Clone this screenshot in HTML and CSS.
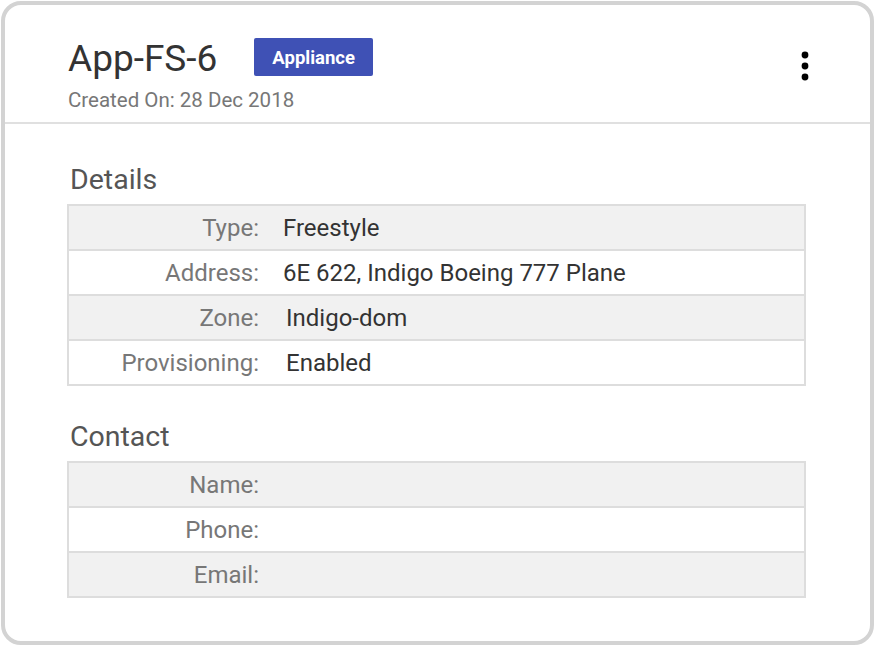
FILE: index.html
```html
<!DOCTYPE html>
<html lang="en">
<head>
  <meta charset="UTF-8">
  <title>App-FS-6</title>
  <link rel="stylesheet" href="styles.css">
</head>
<body>

  <div class="card">
    <div class="card-header">
      <div class="title-block">
        <div class="title-row">
          <h1>App-FS-6</h1>
          <span class="badge">Appliance</span>
        </div>
        <div class="created">Created On: 28 Dec 2018</div>
      </div>
      <button class="menu-btn" aria-label="More">
        <svg width="10" height="30" viewBox="0 0 10 30">
          <circle cx="5" cy="4" r="3.4" fill="#000"/>
          <circle cx="5" cy="15" r="3.4" fill="#000"/>
          <circle cx="5" cy="26" r="3.4" fill="#000"/>
        </svg>
      </button>
    </div>

    <div class="card-body">
      <h2>Details</h2>
      <div class="info-table">
        <div class="info-row"><span class="label">Type:</span><span class="value">Freestyle</span></div>
        <div class="info-row"><span class="label">Address:</span><span class="value">6E 622, Indigo Boeing 777 Plane</span></div>
        <div class="info-row"><span class="label">Zone:</span><span class="value shift">Indigo-dom</span></div>
        <div class="info-row"><span class="label">Provisioning:</span><span class="value shift">Enabled</span></div>
      </div>

      <h2 class="contact-title">Contact</h2>
      <div class="info-table">
        <div class="info-row"><span class="label">Name:</span><span class="value"></span></div>
        <div class="info-row"><span class="label">Phone:</span><span class="value"></span></div>
        <div class="info-row"><span class="label">Email:</span><span class="value"></span></div>
      </div>
    </div>
  </div>

</body>
</html>
```

FILE: styles.css
```css
body {
  margin: 0;
  font-family: Roboto, "Liberation Sans", sans-serif;
  background: #fff;
  color: #333;
}

.card {
  box-sizing: border-box;
  margin: 1px 0 0 1px;
  width: 873px;
  height: 644px;
  border: 4px solid #d3d3d3;
  border-radius: 20px;
  background: #fff;
}

.card-header {
  display: flex;
  justify-content: space-between;
  align-items: flex-start;
  padding: 32px 60px 0 63px;
  height: 85px;
  border-bottom: 2px solid #e0e0e0;
}

.title-row {
  display: flex;
  align-items: flex-start;
  gap: 37px;
}

h1 {
  margin: 0;
  font-size: 37px;
  font-weight: 400;
  color: #333;
  line-height: 44px;
}

.badge {
  margin-top: 1px;
  background: #3f51b5;
  color: #fff;
  font-size: 18.5px;
  font-weight: 700;
  padding: 0 18px;
  height: 38px;
  line-height: 40px;
  border-radius: 2px;
}

.created {
  margin-top: 7px;
  font-size: 20.5px;
  color: #777;
}

.menu-btn {
  background: none;
  border: none;
  padding: 0;
  margin-top: 14px;
  cursor: pointer;
}

.menu-btn svg {
  display: block;
}

.card-body {
  padding: 39px 64px 0 62px;
}

h2 {
  margin: 0 0 7px 3px;
  font-size: 28.5px;
  font-weight: 400;
  color: #555;
  line-height: 34px;
}

.contact-title {
  margin-top: 34px;
}

.info-table {
  border: 2px solid #ddd;
  width: 739px;
  box-sizing: border-box;
}

.info-row {
  display: grid;
  grid-template-columns: 190px 1fr;
  column-gap: 24px;
  align-items: center;
  height: 43px;
  font-size: 24px;
  background: #fff;
}

.info-row + .info-row {
  border-top: 2px solid #ddd;
}

.info-row:nth-child(odd) {
  background: #f1f1f1;
}

.label {
  text-align: right;
  color: #777;
}

.value {
  color: #333;
}

.value.shift {
  padding-left: 3px;
}
```
